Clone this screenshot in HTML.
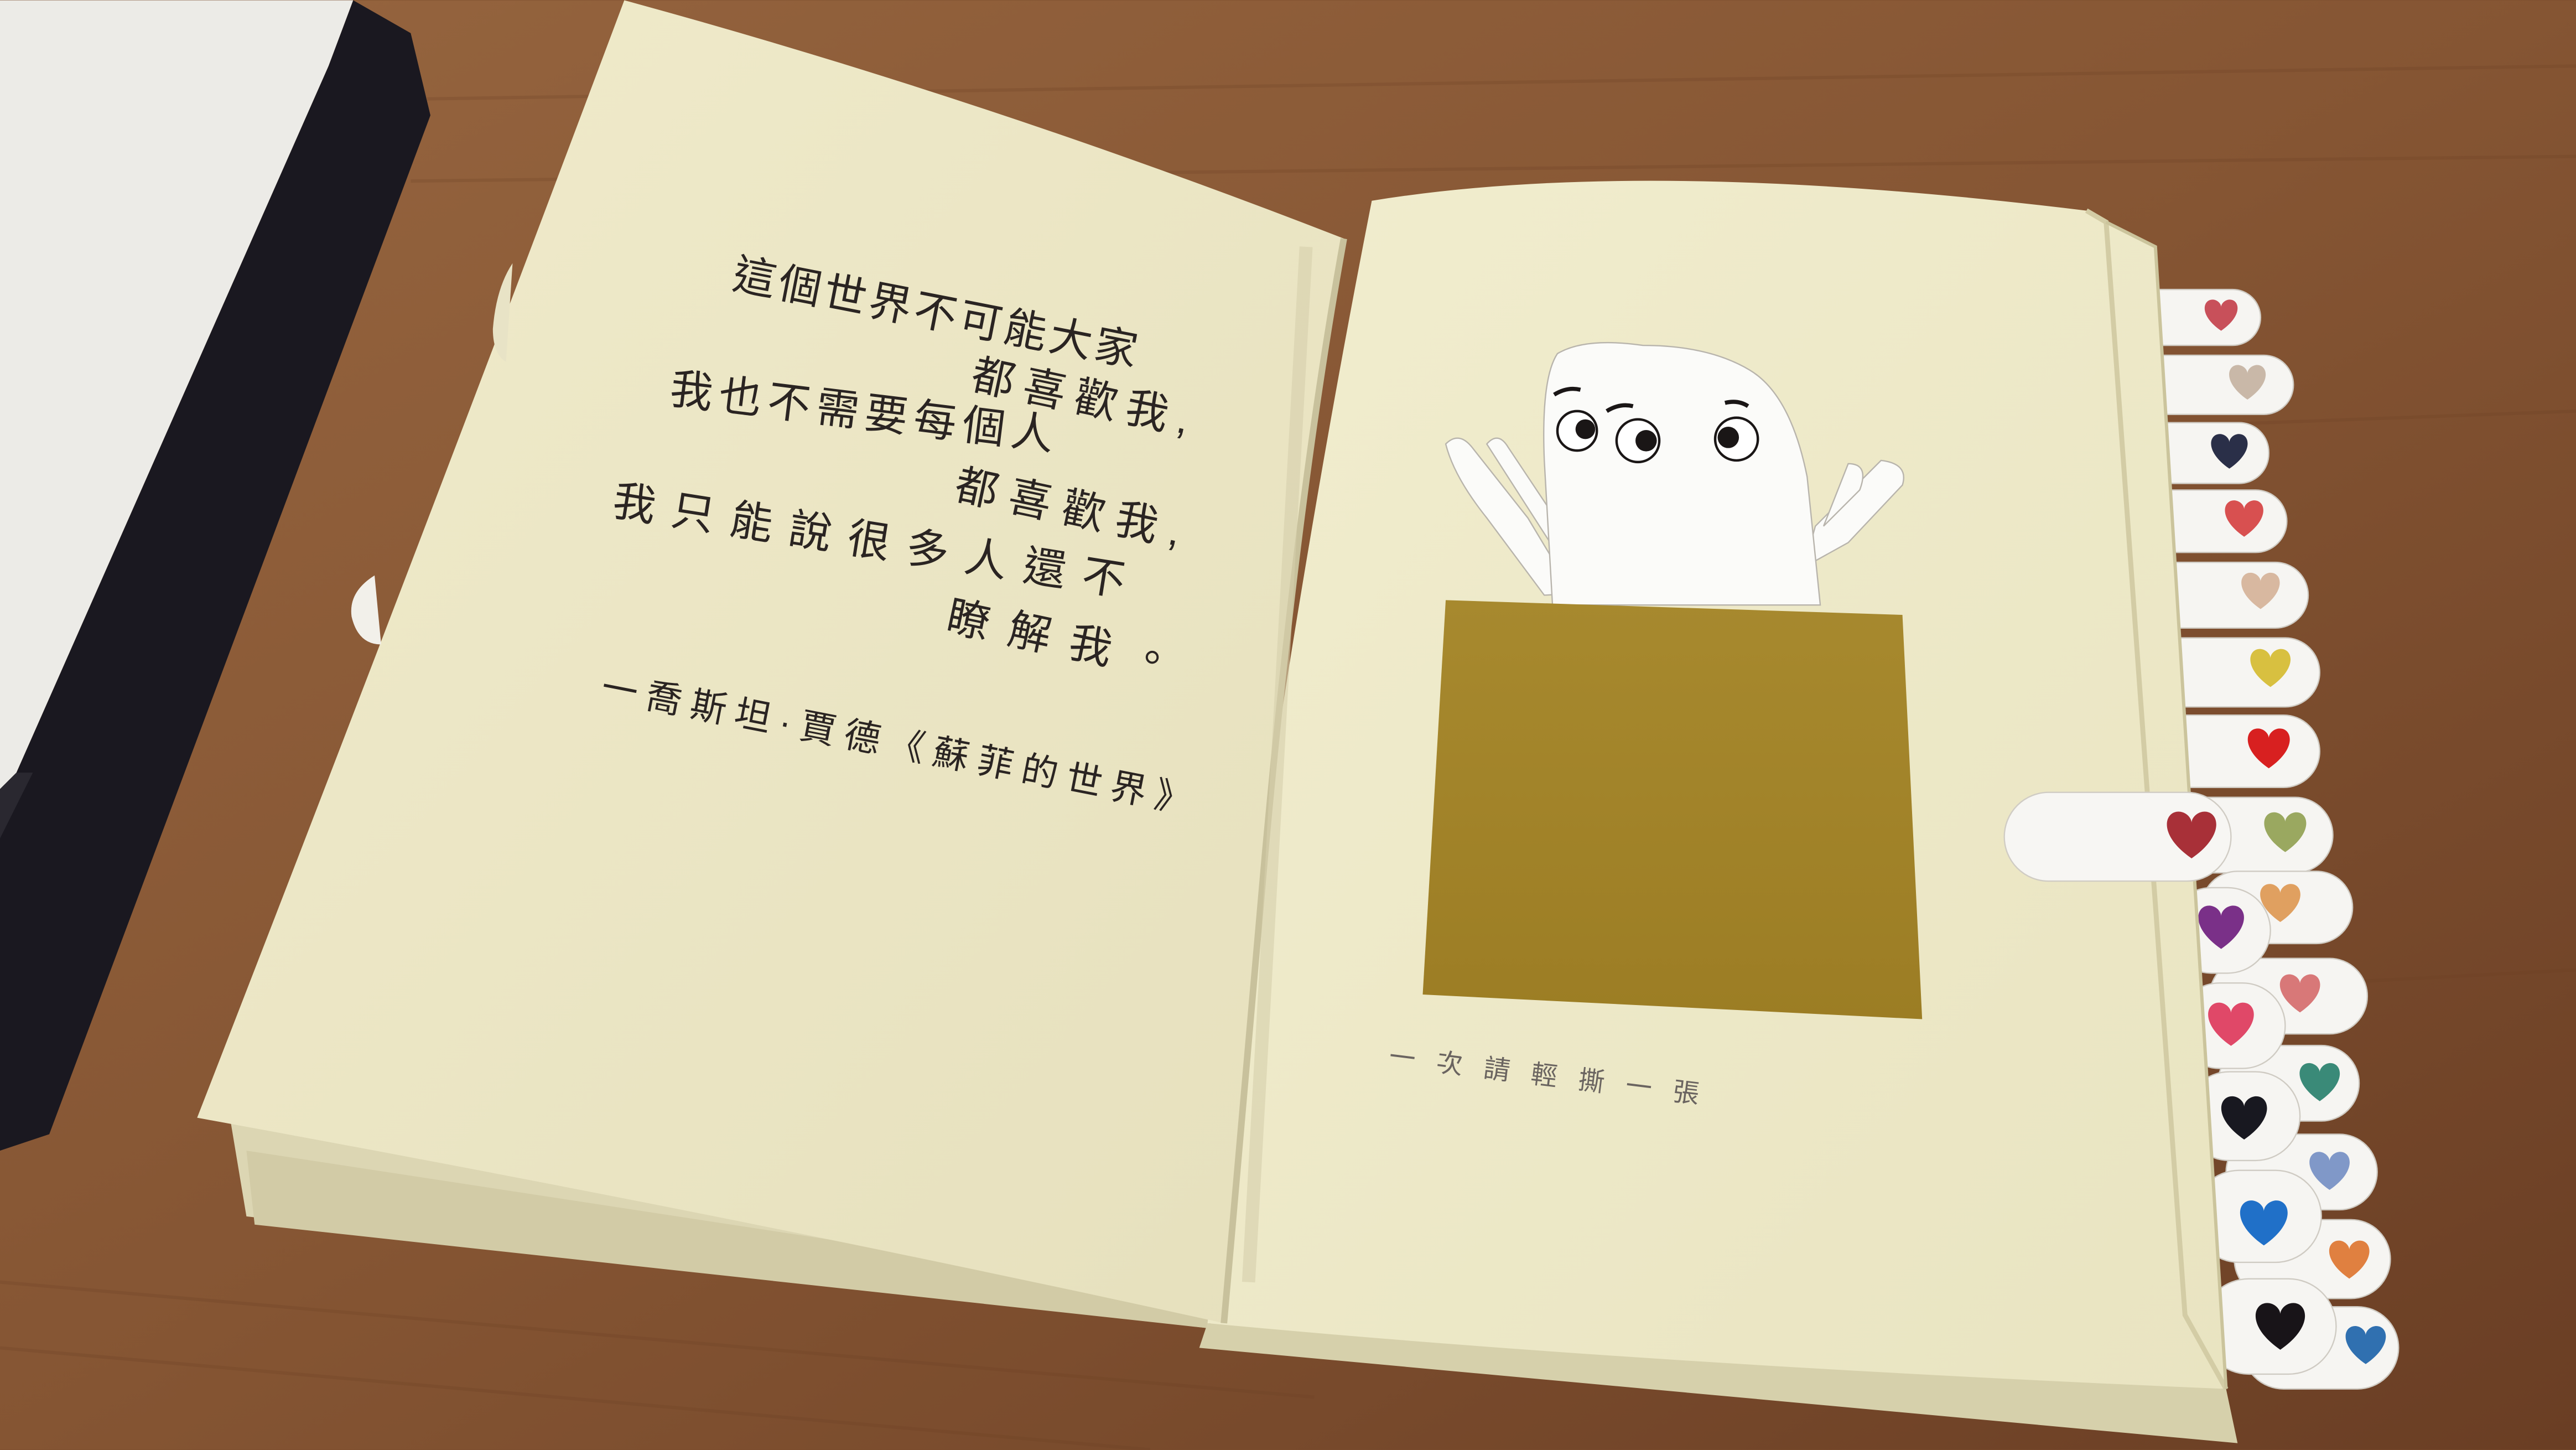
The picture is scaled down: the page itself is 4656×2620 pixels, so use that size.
<!DOCTYPE html>
<html><head><meta charset="utf-8"><style>html,body{margin:0;padding:0;width:4656px;height:2620px;overflow:hidden;background:#7a4c2c}svg{display:block}</style></head><body>
<svg width="4656" height="2620" viewBox="0 0 1568 882" xmlns="http://www.w3.org/2000/svg">
<defs>
<linearGradient id="wood" x1="0" y1="0" x2="1" y2="1">
<stop offset="0" stop-color="#96653f"/><stop offset="0.5" stop-color="#855533"/><stop offset="1" stop-color="#6a3e24"/></linearGradient>
<linearGradient id="lp" x1="0" y1="0" x2="1" y2="1">
<stop offset="0" stop-color="#f0ebcb"/><stop offset="1" stop-color="#e6e0bd"/></linearGradient>
<linearGradient id="rp" x1="0" y1="0" x2="1" y2="1">
<stop offset="0" stop-color="#f1edce"/><stop offset="1" stop-color="#e9e4c1"/></linearGradient>
<linearGradient id="gold" x1="0" y1="0" x2="0" y2="1">
<stop offset="0" stop-color="#a7892e"/><stop offset="1" stop-color="#9c7d24"/></linearGradient>
<path id="h" d="M0,9 C-16,-2 -12,-13 -5,-12 C-2,-11.5 0,-9 0,-7 C0,-9 2,-11.5 5,-12 C12,-13 16,-2 0,9Z"/>
</defs>
<rect width="1568" height="882" fill="url(#wood)"/>
<g stroke="#6a3f22" stroke-opacity="0.25" stroke-width="2" fill="none">
<path d="M260,60 L1568,40"/><path d="M250,110 L1568,95"/><path d="M1300,260 L1568,250"/><path d="M0,780 L800,850"/><path d="M0,820 L700,882"/><path d="M1380,600 L1568,590"/>
</g>
<polygon points="0,0 215,0 200,40 10,470 0,480" fill="#ecebe7"/>
<polygon points="215,0 250,20 262,70 30,690 0,700 0,480 10,470 200,40" fill="#1a1820"/>
<polygon points="0,480 10,470 20,470 0,510" fill="#2a2830"/>
<polygon points="140,680 745,770 735,808 150,740" fill="#dcd6b3"/>
<polygon points="150,700 740,790 735,808 155,745" fill="#d2cba6"/>
<polygon points="735,805 1355,845 1362,878 730,820" fill="#d6d0ab"/>
<g fill="#f6f5f2" stroke="#cfcbc3" stroke-width="0.8">
<rect x="1280" y="176" width="96" height="34" rx="17"/>
<rect x="1280" y="216" width="116" height="36" rx="18"/>
<rect x="1285" y="257" width="96" height="37" rx="18"/>
<rect x="1290" y="298" width="102" height="38" rx="19"/>
<rect x="1295" y="342" width="110" height="40" rx="20"/>
<rect x="1300" y="388" width="112" height="42" rx="21"/>
<rect x="1305" y="435" width="107" height="44" rx="22"/>
<rect x="1310" y="485" width="110" height="46" rx="23"/>
<rect x="1340" y="530" width="92" height="44" rx="22"/>
<rect x="1345" y="583" width="96" height="46" rx="23"/>
<rect x="1350" y="636" width="86" height="46" rx="23"/>
<rect x="1355" y="690" width="92" height="46" rx="23"/>
<rect x="1360" y="742" width="95" height="48" rx="24"/>
<rect x="1365" y="795" width="95" height="50" rx="25"/>
<rect x="1320" y="540" width="62" height="52" rx="26"/>
<rect x="1325" y="598" width="66" height="52" rx="26"/>
<rect x="1330" y="652" width="70" height="54" rx="27"/>
<rect x="1335" y="712" width="78" height="56" rx="28"/>
<rect x="1340" y="778" width="82" height="58" rx="29"/>
</g>
<g>
<use href="#h" transform="translate(1352,193) scale(0.9)" fill="#c8505a"/>
<use href="#h" transform="translate(1368,234) scale(1)" fill="#c9b8a8"/>
<use href="#h" transform="translate(1357,276) scale(1)" fill="#2a2f48"/>
<use href="#h" transform="translate(1366,317) scale(1.05)" fill="#d85050"/>
<use href="#h" transform="translate(1376,361) scale(1.05)" fill="#d8b8a0"/>
<use href="#h" transform="translate(1382,408) scale(1.1)" fill="#d8c040"/>
<use href="#h" transform="translate(1381,457) scale(1.15)" fill="#d82020"/>
<use href="#h" transform="translate(1391,508) scale(1.15)" fill="#9aa860"/>
<use href="#h" transform="translate(1388,551) scale(1.1)" fill="#e0a060"/>
<use href="#h" transform="translate(1400,606) scale(1.1)" fill="#d87878"/>
<use href="#h" transform="translate(1412,660) scale(1.1)" fill="#3a8a78"/>
<use href="#h" transform="translate(1418,714) scale(1.1)" fill="#8098c8"/>
<use href="#h" transform="translate(1430,768) scale(1.1)" fill="#e08040"/>
<use href="#h" transform="translate(1440,820) scale(1.1)" fill="#3070b0"/>
<use href="#h" transform="translate(1352,566) scale(1.25)" fill="#7a3088"/>
<use href="#h" transform="translate(1358,625) scale(1.25)" fill="#e04868"/>
<use href="#h" transform="translate(1366,682) scale(1.25)" fill="#181820"/>
<use href="#h" transform="translate(1378,746) scale(1.3)" fill="#2070c8"/>
<use href="#h" transform="translate(1388,809) scale(1.35)" fill="#181418"/>
</g>
<path d="M835,122 Q1000,95 1270,128 L1282,135 L1312,150 L1355,845 Q1000,830 735,805 L770,500 Q800,300 835,122Z" fill="url(#rp)"/>
<path d="M1270,128 L1282,135 L1330,800 L1355,845" fill="none" stroke="#d3cca5" stroke-width="3"/>
<path d="M1282,135 L1312,150 L1355,845" fill="none" stroke="#cbc49c" stroke-width="2"/>
<path d="M380,0 Q600,60 818,145 Q790,300 770,520 L745,805 Q450,740 120,680 Q260,320 380,0Z" fill="url(#lp)"/>
<path d="M818,145 Q790,300 770,520 L745,805" fill="none" stroke="#c8c19c" stroke-width="4"/>
<path d="M795,150 Q780,400 760,780" fill="none" stroke="#d6cfac" stroke-width="8" opacity="0.6"/>
<path d="M228,350 Q212,360 214,375 Q218,392 232,392 Z" fill="#f2f0ea"/>
<path d="M312,160 Q302,175 300,200 Q300,215 308,220 Z" fill="#e8e3c6"/>
<rect x="1220" y="482" width="138" height="54" rx="27" fill="#f7f6f3" stroke="#d0ccc4" stroke-width="0.8"/>
<use href="#h" transform="translate(1334,510) scale(1.35)" fill="#a83038"/>
<g fill="#fbfbf9" stroke="#b8b4ac" stroke-width="0.8">
<path d="M880,270 Q888,262 896,272 L930,315 L945,340 L975,360 L940,362 L905,315 Q885,290 880,270Z"/>
<path d="M905,270 Q912,262 918,272 L950,320 L950,340 Z"/>
<path d="M1145,280 Q1162,282 1158,295 L1125,330 L1098,345 L1105,320 Z"/>
<path d="M1125,282 Q1138,282 1132,298 L1110,320 Z"/>
<path d="M948,215 Q965,205 1000,210 Q1040,210 1065,225 Q1090,240 1100,290 L1108,368 L945,368 L940,280 Q938,230 948,215Z"/>
</g>
<g stroke="#1a1616" stroke-width="2.5" fill="none">
<path d="M946,240 q8,-5 16,-3"/><path d="M978,250 q8,-5 16,-3"/><path d="M1050,245 q8,-2 14,2"/>
</g>
<g fill="#fff" stroke="#1a1616" stroke-width="1.5">
<circle cx="960" cy="262" r="12"/><circle cx="997" cy="268" r="13"/><circle cx="1057" cy="267" r="13"/>
</g>
<g fill="#1a1616"><circle cx="965" cy="261" r="6"/><circle cx="1002" cy="268" r="6.5"/><circle cx="1052" cy="266" r="6.5"/></g>
<path d="M880,365 L1158,374 L1170,620 L866,605 Z" fill="url(#gold)"/>
<g font-family="'Liberation Sans','Noto Sans CJK TC','WenQuanYi Zen Hei',sans-serif" fill="#2a2422" font-size="26">
<text transform="translate(445,175) rotate(11)" textLength="250" lengthAdjust="spacing">這個世界不可能大家</text>
<text transform="translate(590,236) rotate(12)" textLength="135" lengthAdjust="spacing">都喜歡我,</text>
<text transform="translate(407,245) rotate(7)" textLength="235" lengthAdjust="spacing">我也不需要每個人</text>
<text transform="translate(580,303) rotate(12)" textLength="140" lengthAdjust="spacing">都喜歡我,</text>
<text transform="translate(372,313) rotate(9)" textLength="315" lengthAdjust="spacing">我只能說很多人還不</text>
<text transform="translate(575,383) rotate(12)" textLength="140" lengthAdjust="spacing">瞭解我。</text>
<text transform="translate(365,425) rotate(11)" font-size="22" textLength="365" lengthAdjust="spacing">一喬斯坦·賈德《蘇菲的世界》</text>
<text transform="translate(845,648) rotate(7)" font-size="16" fill="#6a6460" textLength="190" lengthAdjust="spacing">一次請輕撕一張</text>
</g>
</svg>
</body></html>
